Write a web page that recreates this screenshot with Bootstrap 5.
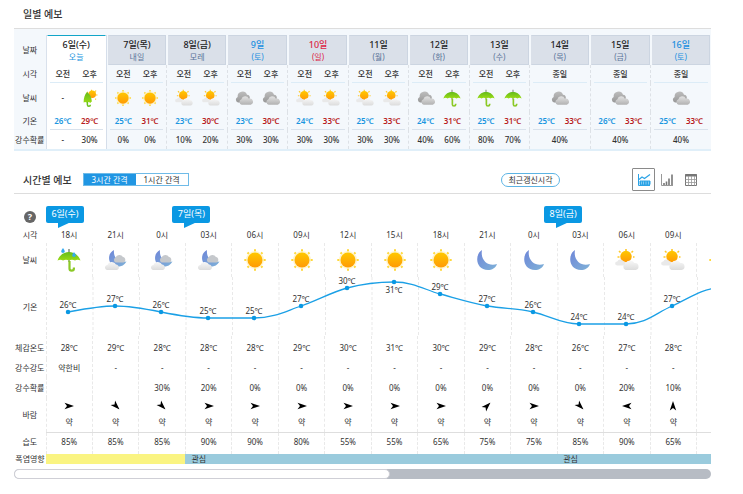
<!DOCTYPE html>
<html lang="ko">
<head>
<meta charset="utf-8">
<meta name="viewport" content="width=device-width, initial-scale=1">
<title>일별 예보 · 시간별 예보</title>
<link href="https://cdn.jsdelivr.net/npm/bootstrap@5.3.0/dist/css/bootstrap.min.css" rel="stylesheet">
<style>
body{font-family:"Noto Sans","Noto Sans CJK KR",sans-serif;font-size:8px;line-height:12px;color:#333}
.page{padding:0 32px 12px 14px}
.sec-head{height:28px;padding-left:9px}
.sec-head.hourly{height:28px;margin-top:15px;border-bottom:1px solid #ddd}
.sec-title{font-size:10px;line-height:14px;font-weight:500}
.wx{--bs-table-bg:transparent;--bs-table-color:#333;table-layout:fixed;font-size:8px;line-height:12px;color:#333;border-collapse:collapse}
.wx.table>:not(caption)>*>*{padding:0;font-weight:400}
.wx .lab{width:32px;white-space:nowrap}
.wx svg{display:block;margin:0 auto}
/* daily */
.daily{background:#f4f8fc;border-top:1px solid #ddd;border-bottom:2px solid #e0eff9;padding-top:6px}
.daily .day-row{height:30px;vertical-align:middle}
.daily .day-row th:not(.lab){height:30px;padding:0 1px}
.day-box{height:30px;background:#dae0e9;border:1px solid #ccd5e1;border-left-color:#dae0e9;color:#5b7499;padding-top:3px}
.day-box b{display:block;font-size:9px;font-weight:500;color:#222}
.today .day-box{background:#fff;border-color:#fff;border-top-color:#12a5c8;color:#1b96e0}
.sat .day-box,.sat .day-box b{color:#1b8fe0}
.sun .day-box,.sun .day-box b{color:#dc2544}
.daily td.today,.daily th.today{background:#fff;border-left:1px solid #d9e1ec;border-right:1px solid #d5deea}
.daily .day-row .today.today{padding:0}
.daily td+td+td{border-left:1px dashed #dde1e6}
.daily .r-time{height:18px}.daily .r-icon{height:29px}.daily .r-temp{height:18px}.daily .r-pop{height:19px}
.pair{display:flex;margin:0 3px;justify-content:space-evenly;align-items:center;font-weight:500}
.pair>*{flex:1 1 0}
.r-time .pair{height:18px;border-bottom:1px solid #dcecf7}
.r-temp .pair{height:18px;border-bottom:1px solid #d9e2ec;font-weight:600}
.lo{color:#1b96e0}.hi{color:#b81c22}
.w18{width:18px;height:18px}
/* hourly */
.seg{border:1px solid #6fbbe8;display:flex;margin-left:11px}
.seg .btn{--bs-btn-padding-x:0;--bs-btn-padding-y:0;--bs-btn-font-size:8px;--bs-btn-border-radius:0;--bs-btn-border-width:0px;line-height:11px;width:52px;color:#333}
.seg .btn.active{background:#2196e3;color:#fff}
.pill{border:1px solid #5cb4e4;border-radius:8px;background:#fff;color:#333;font-size:8px;line-height:12px;padding:0;width:59px}
.view-btn{width:24px;height:23px;padding:0;background:none;border:1px solid transparent;border-radius:1px;display:flex;align-items:center;justify-content:center}
.view-btn.active{width:23px;border-color:#8a8a8a}
.views{margin-left:72px;padding-right:8px}
.hscroll{overflow:hidden;padding-top:12px}
.hourly-wx.table{width:104.6%;max-width:none}
.help{width:12px;height:12px;border-radius:50%;background:#666;color:#fff;border:0;padding:0;font:700 9px/12px "Noto Sans",sans-serif;display:block;margin:5px auto 0}
.tag{position:relative;display:block;width:38px;height:17px;background:#0a98e3;color:#fff;border-radius:2px;line-height:16px;font-size:9px;text-align:center;white-space:nowrap}
.tag::after{content:"";position:absolute;left:12px;top:16px;border-top:6px solid #0a98e3;border-right:13px solid transparent}
.tag.shift{margin-left:-13px}
.r-tag{height:23px;vertical-align:top}
.hourly-wx .r-hour{height:14px;vertical-align:top}.hourly-wx .r-sky{height:34px}
.hourly-wx .r-feel{height:23px}.hourly-wx .r-amt{height:18px}.hourly-wx .r-prob{height:21px}
.hourly-wx .r-wind{height:34px}.hourly-wx .r-hum{height:22px}.hourly-wx .r-heat{height:10px}
.r-hum>*{padding-bottom:2px!important}
.hourly-wx tr:not(.r-tag):not(.r-hour):not(.r-chart):not(.r-heat)>td{border-left:1px dashed #e9e9e9}
.r-wind td{border-bottom:1px solid #dedede!important}
.arr{width:10px;height:10px;margin-bottom:5px!important}
.se{transform:rotate(45deg)}.ne{transform:rotate(-45deg)}.w{transform:rotate(180deg)}.n{transform:rotate(-90deg)}
.w24{width:24px;height:24px}
.r-chart svg{width:100%;height:auto;overflow:visible}
.r-chart text{font-size:8px;text-anchor:middle;fill:#333}
.r-heat td{line-height:10px;text-align:left}
.wx .cool{background:#9acbdd;padding-left:6px!important}
.wx .warm{background:#faf482}
.track{height:10px;border-radius:5px;background:#b7bcc4;margin-top:5px}
.thumb{width:54%;height:10px;border-radius:5px;background:#fff;border:1px solid #cfcfd6}
</style>
</head>
<body>
<svg width="0" height="0" class="position-absolute" aria-hidden="true">
<defs>
<linearGradient id="gs" x2="0" y2="1"><stop stop-color="#ffc800"/><stop offset="1" stop-color="#ff9a05"/></linearGradient>
<linearGradient id="gd" x2="0" y2="1"><stop stop-color="#bdbdbd"/><stop offset="1" stop-color="#989898"/></linearGradient>
<linearGradient id="gl" x2="0" y2="1"><stop stop-color="#e2e2e2"/><stop offset="1" stop-color="#b2b2b2"/></linearGradient>
<linearGradient id="gw" x2="0" y2="1"><stop stop-color="#f8f8f8"/><stop offset="1" stop-color="#dcdcdc"/></linearGradient>
<linearGradient id="gu" x2="0" y2="1"><stop stop-color="#65bb1c"/><stop offset="1" stop-color="#9adb14"/></linearGradient>
<linearGradient id="gm" x2="1" y2="1"><stop stop-color="#6e86d8"/><stop offset="1" stop-color="#7fb2d8"/></linearGradient>
<symbol id="sun" viewBox="0 0 24 24"><circle cx="12" cy="12" r="9" fill="#ffefb0" opacity=".7"/><path d="M12 1.300v2M12 20.700v2M1.300 12h2M20.700 12h2M4.500 4.500l1.300 1.300M18.200 18.200l1.300 1.300M4.500 19.500l1.300-1.300M18.200 5.800l1.300-1.300" stroke="#ffd83a" stroke-width="2"/><circle cx="12" cy="12" r="7.500" fill="url(#gs)"/></symbol>
<symbol id="pc" viewBox="0 0 24 24"><path d="M11 1v2M4 3l1.500 1.500M18 3l-1.500 1.500M2.500 9h2M18 9h1.500" stroke="#ffc928" stroke-width="1.600"/><circle cx="11" cy="8.500" r="5.700" fill="url(#gs)"/><path d="M2 17.500a2 2 0 0 1 .3-4 3.400 3.400 0 0 1 6-.3 2.200 2.200 0 0 1 .7 4.300z" fill="#e9e9e9"/><path d="M10.500 22a3.500 3.500 0 0 1 0-6.500 5 5 0 0 1 9-.5 3.500 3.500 0 0 1 1 7z" fill="url(#gw)"/></symbol>
<symbol id="cloud" viewBox="0 0 24 24"><path d="M4 18a4 4 0 0 1-.5-7.500 6.500 6.500 0 0 1 12.500-3c3 0 4.500 2.500 3.500 5.500l-3 5z" fill="url(#gd)"/><path d="M9 21a3.800 3.800 0 0 1-.5-7.300A5.300 5.300 0 0 1 18.500 13a4 4 0 0 1 2.500 8z" fill="url(#gl)"/></symbol>
<symbol id="umb" viewBox="0 0 24 24"><path d="M12 1v13" stroke="#9aa197" stroke-width="1.800"/><path d="M12.500 13v7.500a2.200 2.200 0 0 0 4.400 0v-1" fill="none" stroke="#8bc926" stroke-width="2.200"/><path d="M.5 12.500C3 6 8 4 12 4s9 2 11.500 8.500c-2-1-4-1-5.500 0-2-1-4-1-6 0-2-1-4-1-6 0-1.500-1-3.500-1-5.500 0z" fill="url(#gu)"/></symbol>
<symbol id="rain" viewBox="0 0 24 24"><use href="#umb"/><path d="M6 0c3 3.800 1.600 5 0 5s-3-1.200 0-5zM17 4c3 3.800 1.600 5 0 5s-3-1.200 0-5z" fill="#35aaf0"/></symbol>
<symbol id="ubs" viewBox="0 0 24 24"><path d="M14 1v2M8 4l1.500 1M20 2l-1 1.500M22 8h-2M19 13l1 1" stroke="#ffc928" stroke-width="1.600"/><circle cx="15" cy="7" r="5" fill="url(#gs)"/><path d="M8 4C5 7 3.500 12 3.500 18c1.500-1 2.500-1 4 0 1-1 3.500-1 5 .5.500-1 1.500-2 2-2C14 11 12 6.500 8 4z" fill="url(#gu)"/><path d="M8.500 17v4a2 2 0 0 0 4 0" fill="none" stroke="#6cc31e" stroke-width="2"/></symbol>
<symbol id="moon" viewBox="0 0 24 24"><path d="M7 2C-1 7 1 22 13 22c4 0 7.500-2 9-6-8 3-17-3-15-14z" fill="url(#gm)"/></symbol>
<symbol id="mc" viewBox="0 0 24 24"><path d="M10 2C4 5 4 12 7 15.500c4 4.500 12 4.500 15.500-2C15 15 9 10 10 2z" fill="url(#gm)"/><path d="M11.500 14.500a2.800 2.800 0 0 1 0-5 4.200 4.200 0 0 1 7.500-.5c3 .5 3 5 .5 5.500z" fill="#c5c8cc"/><path d="M3 22c-3-1-2.500-4.500.5-5a4.600 4.600 0 0 1 8.500-.5c3.500.5 4 4.500 1 5.500z" fill="url(#gw)"/></symbol>
<symbol id="arrow" viewBox="0 0 10 10"><path d="M.5 1.800L10 5 .5 8.200 3 5z" fill="#000"/></symbol>
</defs>
</svg>

<main class="page">
<section>
<div class="sec-head d-flex align-items-center"><h2 class="sec-title mb-0">일별 예보</h2></div>
<div class="daily">
<table class="table table-borderless align-middle text-center mb-0 wx">
<thead class="align-middle"><tr class="day-row"><th class="lab" scope="row">날짜</th>
<th class="today" scope="col"><div class="day-box"><b>6일(수)</b>오늘</div></th>
<th scope="col"><div class="day-box"><b>7일(목)</b>내일</div></th>
<th scope="col"><div class="day-box"><b>8일(금)</b>모레</div></th>
<th class="sat" scope="col"><div class="day-box"><b>9일</b>(토)</div></th>
<th class="sun" scope="col"><div class="day-box"><b>10일</b>(일)</div></th>
<th scope="col"><div class="day-box"><b>11일</b>(월)</div></th>
<th scope="col"><div class="day-box"><b>12일</b>(화)</div></th>
<th scope="col"><div class="day-box"><b>13일</b>(수)</div></th>
<th scope="col"><div class="day-box"><b>14일</b>(목)</div></th>
<th scope="col"><div class="day-box"><b>15일</b>(금)</div></th>
<th class="sat" scope="col"><div class="day-box"><b>16일</b>(토)</div></th></tr></thead>
<tbody>
<tr class="r-time"><th class="lab" scope="row">시각</th>
<td class="today"><div class="pair"><span>오전</span><span>오후</span></div></td>
<td><div class="pair"><span>오전</span><span>오후</span></div></td>
<td><div class="pair"><span>오전</span><span>오후</span></div></td>
<td><div class="pair"><span>오전</span><span>오후</span></div></td>
<td><div class="pair"><span>오전</span><span>오후</span></div></td>
<td><div class="pair"><span>오전</span><span>오후</span></div></td>
<td><div class="pair"><span>오전</span><span>오후</span></div></td>
<td><div class="pair"><span>오전</span><span>오후</span></div></td>
<td><div class="pair"><span>종일</span></div></td>
<td><div class="pair"><span>종일</span></div></td>
<td><div class="pair"><span>종일</span></div></td></tr>
<tr class="r-icon"><th class="lab" scope="row">날씨</th>
<td class="today"><div class="pair"><span>-</span><span><svg class="w18"><use href="#ubs"/></svg></span></div></td>
<td><div class="pair"><span><svg class="w18"><use href="#sun"/></svg></span><span><svg class="w18"><use href="#sun"/></svg></span></div></td>
<td><div class="pair"><span><svg class="w18"><use href="#pc"/></svg></span><span><svg class="w18"><use href="#pc"/></svg></span></div></td>
<td><div class="pair"><span><svg class="w18"><use href="#cloud"/></svg></span><span><svg class="w18"><use href="#cloud"/></svg></span></div></td>
<td><div class="pair"><span><svg class="w18"><use href="#pc"/></svg></span><span><svg class="w18"><use href="#pc"/></svg></span></div></td>
<td><div class="pair"><span><svg class="w18"><use href="#pc"/></svg></span><span><svg class="w18"><use href="#pc"/></svg></span></div></td>
<td><div class="pair"><span><svg class="w18"><use href="#cloud"/></svg></span><span><svg class="w18"><use href="#umb"/></svg></span></div></td>
<td><div class="pair"><span><svg class="w18"><use href="#umb"/></svg></span><span><svg class="w18"><use href="#umb"/></svg></span></div></td>
<td><svg class="w18"><use href="#cloud"/></svg></td>
<td><svg class="w18"><use href="#cloud"/></svg></td>
<td><svg class="w18"><use href="#cloud"/></svg></td></tr>
<tr class="r-temp"><th class="lab" scope="row">기온</th>
<td class="today"><div class="pair"><span class="lo">26℃</span><span class="hi">29℃</span></div></td>
<td><div class="pair"><span class="lo">25℃</span><span class="hi">31℃</span></div></td>
<td><div class="pair"><span class="lo">23℃</span><span class="hi">30℃</span></div></td>
<td><div class="pair"><span class="lo">23℃</span><span class="hi">30℃</span></div></td>
<td><div class="pair"><span class="lo">24℃</span><span class="hi">33℃</span></div></td>
<td><div class="pair"><span class="lo">25℃</span><span class="hi">33℃</span></div></td>
<td><div class="pair"><span class="lo">24℃</span><span class="hi">31℃</span></div></td>
<td><div class="pair"><span class="lo">25℃</span><span class="hi">31℃</span></div></td>
<td><div class="pair"><span class="lo">25℃</span><span class="hi">33℃</span></div></td>
<td><div class="pair"><span class="lo">26℃</span><span class="hi">33℃</span></div></td>
<td><div class="pair"><span class="lo">25℃</span><span class="hi">33℃</span></div></td></tr>
<tr class="r-pop"><th class="lab" scope="row">강수확률</th>
<td class="today"><div class="pair"><span>-</span><span>30%</span></div></td>
<td><div class="pair"><span>0%</span><span>0%</span></div></td>
<td><div class="pair"><span>10%</span><span>20%</span></div></td>
<td><div class="pair"><span>30%</span><span>30%</span></div></td>
<td><div class="pair"><span>30%</span><span>30%</span></div></td>
<td><div class="pair"><span>30%</span><span>30%</span></div></td>
<td><div class="pair"><span>40%</span><span>60%</span></div></td>
<td><div class="pair"><span>80%</span><span>70%</span></div></td>
<td><div class="pair"><span>40%</span></div></td>
<td><div class="pair"><span>40%</span></div></td>
<td><div class="pair"><span>40%</span></div></td></tr>
</tbody></table>
</div>
</section>

<section>
<div class="sec-head hourly d-flex align-items-center">
<h2 class="sec-title mb-0">시간별 예보</h2>
<div class="seg" role="group" aria-label="간격"><button type="button" class="btn active">3시간 간격</button><button type="button" class="btn">1시간 간격</button></div>
<button type="button" class="pill ms-auto">최근갱신시각</button>
<div class="views d-flex">
<button type="button" class="view-btn active" aria-label="그래프"><svg width="14" height="14" viewBox="0 0 14 14" fill="none" stroke="#2ba3e6"><path d="M1.500 1v11.500H13"/><path d="M2 6.500l3-2.500 2.500 1.500L13 1.500" stroke-width="1.200"/><path d="M3 8h10v3.500H3z" fill="#2ba3e6"/><path d="M4.500 8.500v3M6.500 8.500v3M9 8.500v3M11.500 8.500v3" stroke="#bfe4f8" stroke-width=".6"/></svg></button>
<button type="button" class="view-btn" aria-label="막대"><svg width="14" height="14" viewBox="0 0 14 14" fill="none" stroke="#777"><path d="M1.500 1v11.500H13" stroke="#999"/><path d="M4 12V10M6.500 12V8.500M9 12V5.500M12 12V1.500" stroke-width="1.600"/></svg></button>
<button type="button" class="view-btn" aria-label="표"><svg width="14" height="14" viewBox="0 0 14 14" fill="none" stroke="#777"><path d="M1.500 1.500h11v11h-11z"/><path d="M1 2.500h12" stroke-width="2"/><path d="M1.500 6.500h11M1.500 9.500h11M4.500 3v9.500M7.500 3v9.500M10.500 3v9.500" stroke="#999" stroke-width=".8"/></svg></button>
</div>
</div>
<div class="hscroll">
<table class="table table-borderless align-middle text-center mb-0 wx hourly-wx">
<colgroup><col class="lab"><col span="15"></colgroup>
<thead>
<tr class="r-tag align-top"><td class="lab"><button type="button" class="help" aria-label="도움말">?</button></td><th colspan="3" scope="colgroup"><span class="tag">6일(수)</span></th><th colspan="8" scope="colgroup"><span class="tag shift">7일(목)</span></th><th colspan="4" scope="colgroup"><span class="tag shift">8일(금)</span></th></tr>
<tr class="r-hour"><th class="lab" scope="row">시각</th><th>18시</th><th>21시</th><th>0시</th><th>03시</th><th>06시</th><th>09시</th><th>12시</th><th>15시</th><th>18시</th><th>21시</th><th>0시</th><th>03시</th><th>06시</th><th>09시</th><th></th></tr>
</thead>
<tbody>
<tr class="r-sky"><th class="lab" scope="row">날씨</th>
<td><svg class="w24"><use href="#rain"/></svg></td><td><svg class="w24"><use href="#mc"/></svg></td><td><svg class="w24"><use href="#mc"/></svg></td><td><svg class="w24"><use href="#mc"/></svg></td>
<td><svg class="w24"><use href="#sun"/></svg></td><td><svg class="w24"><use href="#sun"/></svg></td><td><svg class="w24"><use href="#sun"/></svg></td><td><svg class="w24"><use href="#sun"/></svg></td><td><svg class="w24"><use href="#sun"/></svg></td>
<td><svg class="w24"><use href="#moon"/></svg></td><td><svg class="w24"><use href="#moon"/></svg></td><td><svg class="w24"><use href="#moon"/></svg></td>
<td><svg class="w24"><use href="#pc"/></svg></td><td><svg class="w24"><use href="#pc"/></svg></td><td><svg class="w24"><use href="#sun"/></svg></td></tr>
<tr class="r-chart"><th class="lab" scope="row">기온</th>
<td colspan="15"><svg viewBox="0 0 697 59" role="img" aria-label="기온 그래프">
<path d="M.5 0v59M47 0v59M93.500 0v59M140 0v59M186.500 0v59M233 0v59M279.500 0v59M326 0v59M372.500 0v59M419 0v59M465.500 0v59M512 0v59M558.500 0v59M605 0v59M651.500 0v59" stroke="#e9e9e9" stroke-dasharray="3 2" fill="none"/>
<path d="M22 35C38 32 53 29 69 29S100 32 115 35 146 41 162 41H208C228 41 240 34 255 29S286 15 301 11 332 5 348 5C368 5 379 13 394 17S425 26 441 29C460 32 470 31 487 35S515 47 533 47H580C600 47 610 36 626 29S655 12 672 11" fill="none" stroke="#1ba0e6" stroke-width="1.300"/>
<g fill="#0a98e3"><circle cx="22" cy="35" r="2.300"/><circle cx="69" cy="29" r="2.300"/><circle cx="115" cy="35" r="2.300"/><circle cx="162" cy="41" r="2.300"/><circle cx="208" cy="41" r="2.300"/><circle cx="255" cy="29" r="2.300"/><circle cx="301" cy="11" r="2.300"/><circle cx="348" cy="5" r="2.300"/><circle cx="394" cy="17" r="2.300"/><circle cx="441" cy="29" r="2.300"/><circle cx="487" cy="35" r="2.300"/><circle cx="533" cy="47" r="2.300"/><circle cx="580" cy="47" r="2.300"/><circle cx="626" cy="29" r="2.300"/></g>
<text x="22" y="31">26℃</text><text x="69" y="25">27℃</text><text x="115" y="31">26℃</text><text x="162" y="37">25℃</text><text x="208" y="37">25℃</text><text x="255" y="25">27℃</text><text x="301" y="7">30℃</text><text x="348" y="16">31℃</text><text x="394" y="13">29℃</text><text x="441" y="25">27℃</text><text x="487" y="31">26℃</text><text x="533" y="43">24℃</text><text x="580" y="43">24℃</text><text x="626" y="25">27℃</text>
</svg></td></tr>
<tr class="r-feel"><th class="lab" scope="row">체감온도</th><td>28℃</td><td>29℃</td><td>28℃</td><td>28℃</td><td>28℃</td><td>29℃</td><td>30℃</td><td>31℃</td><td>30℃</td><td>29℃</td><td>28℃</td><td>26℃</td><td>27℃</td><td>28℃</td><td></td></tr>
<tr class="r-amt"><th class="lab" scope="row">강수강도</th><td>약한비</td><td>-</td><td>-</td><td>-</td><td>-</td><td>-</td><td>-</td><td>-</td><td>-</td><td>-</td><td>-</td><td>-</td><td>-</td><td>-</td><td></td></tr>
<tr class="r-prob"><th class="lab" scope="row">강수확률</th><td></td><td></td><td>30%</td><td>20%</td><td>0%</td><td>0%</td><td>0%</td><td>0%</td><td>0%</td><td>0%</td><td>0%</td><td>0%</td><td>20%</td><td>10%</td><td></td></tr>
<tr class="r-wind"><th class="lab" scope="row">바람</th>
<td><svg class="arr"><use href="#arrow"/></svg>약</td><td><svg class="arr se"><use href="#arrow"/></svg>약</td><td><svg class="arr se"><use href="#arrow"/></svg>약</td><td><svg class="arr"><use href="#arrow"/></svg>약</td><td><svg class="arr"><use href="#arrow"/></svg>약</td><td><svg class="arr"><use href="#arrow"/></svg>약</td><td><svg class="arr"><use href="#arrow"/></svg>약</td><td><svg class="arr"><use href="#arrow"/></svg>약</td><td><svg class="arr"><use href="#arrow"/></svg>약</td><td><svg class="arr ne"><use href="#arrow"/></svg>약</td><td><svg class="arr"><use href="#arrow"/></svg>약</td><td><svg class="arr se"><use href="#arrow"/></svg>약</td><td><svg class="arr w"><use href="#arrow"/></svg>약</td><td><svg class="arr n"><use href="#arrow"/></svg>약</td><td></td></tr>
<tr class="r-hum"><th class="lab" scope="row">습도</th><td>85%</td><td>85%</td><td>85%</td><td>90%</td><td>90%</td><td>80%</td><td>55%</td><td>55%</td><td>65%</td><td>75%</td><td>75%</td><td>85%</td><td>90%</td><td>65%</td><td></td></tr>
<tr class="r-heat"><th class="lab lh-1" scope="row">폭염영향</th><td colspan="3" class="warm"></td><td colspan="8" class="cool">관심</td><td colspan="4" class="cool">관심</td></tr>
</tbody></table>
</div>
<div class="track"><div class="thumb"></div></div>
</section>
</main>
<script src="https://cdn.jsdelivr.net/npm/bootstrap@5.3.0/dist/js/bootstrap.bundle.min.js"></script>
</body>
</html>
